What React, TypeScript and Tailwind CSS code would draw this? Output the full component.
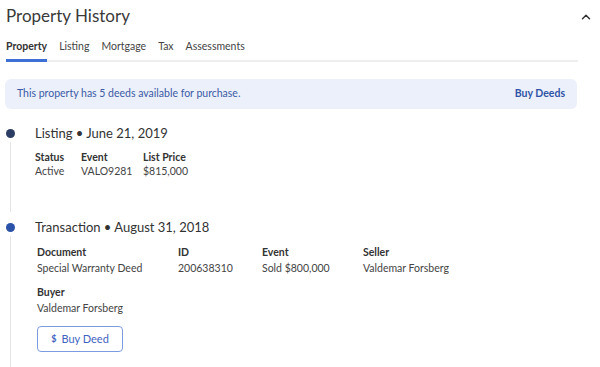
import { ChevronUp } from "lucide-react";

const tabs = ["Property", "Listing", "Mortgage", "Tax", "Assessments"];

const transaction = [
  { label: "Document", value: "Special Warranty Deed", w: "w-[141px]" },
  { label: "ID", value: "200638310", w: "w-[84px]" },
  { label: "Event", value: "Sold $800,000", w: "w-[101px]" },
  { label: "Seller", value: "Valdemar Forsberg", w: "w-[140px]" },
];

function Field({ label, value, w, gap = "mt-[2px]" }: { label: string; value: string; w?: string; gap?: string }) {
  return (
    <div className={w}>
      <p className="text-[10.5px] leading-[14px] font-bold text-[#333]">{label}</p>
      <p className={`text-[10.5px] leading-[14px] text-[#444] ${gap}`}>{value}</p>
    </div>
  );
}

export default function App() {
  return (
    <div className="w-[600px] h-[367px] overflow-hidden bg-white pl-[6px] font-['Lato',sans-serif] text-[#333]">
      <div className="flex items-center justify-between pt-[4px] pr-[7px]">
        <h1 className="text-[17px] leading-[24px] text-[#3a3a3a]">Property History</h1>
        <ChevronUp className="h-[14px] w-[14px] text-[#333] mt-[2px]" strokeWidth={2.5} />
      </div>

      <div className="w-[572px] mt-[11px] flex gap-[12px] border-b-2 border-[#eeeeee]">
        {tabs.map((t, i) => (
          <div
            key={t}
            className={
              i === 0
                ? "pb-[6px] -mb-[2px] border-b-[3px] border-[#3d6fd6] text-[10.5px] leading-[14px] font-bold text-[#333]"
                : "pb-[6px] text-[10.5px] leading-[14px] text-[#444]"
            }
          >
            {t}
          </div>
        ))}
      </div>

      <div className="w-[572px] -ml-[1px] mt-[17px] h-[30px] rounded-md bg-[#ecf0fa] flex items-center justify-between px-[12px]">
        <span className="text-[10.5px] text-[#3b5ba5]">This property has 5 deeds available for purchase.</span>
        <span className="text-[10.5px] font-bold text-[#2f54a6]">Buy Deeds</span>
      </div>

      <div className="mt-[15px]">
        <div className="flex">
          <div className="w-[9px] flex flex-col items-center pt-[5px]">
            <div className="h-[9px] w-[9px] rounded-full bg-[#2c3d63]" />
            <div className="flex-1 w-px bg-[#e4e4e4] mt-[4px] mb-[6px]" />
          </div>
          <div className="ml-[20px] pb-[40px]">
            <p className="text-[13px] leading-[18px] text-[#333]">Listing • June 21, 2019</p>
            <div className="flex gap-[12px] mt-[8px]">
              <Field label="Status" value="Active" w="w-[34px]" gap="mt-0" />
              <Field label="Event" value="VALO9281" w="w-[50px]" gap="mt-0" />
              <Field label="List Price" value="$815,000" gap="mt-0" />
            </div>
          </div>
        </div>

        <div className="flex">
          <div className="w-[9px] flex flex-col items-center pt-[5px]">
            <div className="h-[9px] w-[9px] rounded-full bg-[#2a52a8]" />
            <div className="flex-1 w-px bg-[#e4e4e4] mt-[4px]" />
          </div>
          <div className="ml-[20px] pb-[20px]">
            <p className="text-[13px] leading-[18px] text-[#333]">Transaction • August 31, 2018</p>
            <div className="pl-[2px]">
              <div className="flex mt-[9px]">
                {transaction.map((f) => (
                  <Field key={f.label} {...f} />
                ))}
              </div>
              <div className="mt-[10px]">
                <Field label="Buyer" value="Valdemar Forsberg" />
              </div>
              <button className="mt-[11px] h-[26px] w-[86px] rounded-[4px] border border-[#7c9be0] flex items-center justify-center gap-[5px] text-[#3f63c0]">
                <span className="text-[9px] font-bold">$</span>
                <span className="text-[11px]">Buy Deed</span>
              </button>
            </div>
          </div>
        </div>
      </div>
    </div>
  );
}
